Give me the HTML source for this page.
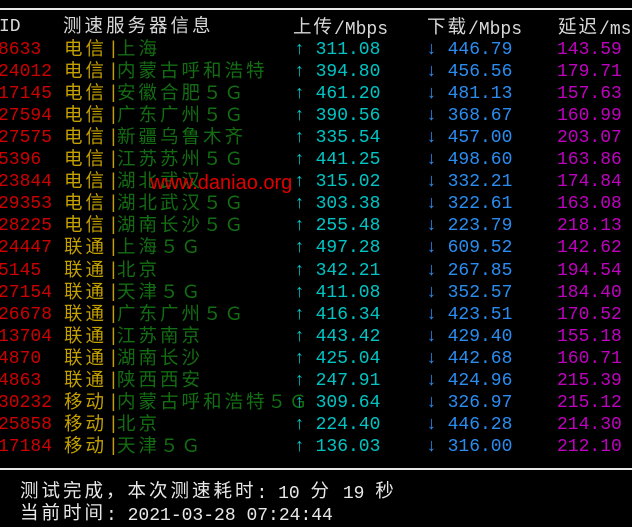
<!DOCTYPE html>
<html><head><meta charset="utf-8"><style>
body{margin:0;width:632px;height:525px;background:#000;overflow:hidden;position:relative;font-family:"Liberation Mono","Noto Sans CJK SC",monospace;font-size:18px}
.r{position:absolute;left:0;width:632px;height:22px;line-height:22px;white-space:nowrap}
.r>span{position:absolute;top:0;line-height:22px}
.id{left:-2px;color:#cc0000}
.isp{left:64px;color:#c4a000}
.bar{left:108px;color:#c4a000}
.city{left:117px;color:#136d13}
.up{left:294px;color:#00c4c4}
.dn{left:426px;color:#2b8cf0}
.lt{left:557px;color:#c000c0}
.hl{position:absolute;left:0;width:632px;height:2px;background:#e8e8e8}
.h{color:#d8d8d8}
.cj,.isp,.city{font-family:"Noto Sans CJK SC",sans-serif;font-size:18.5px;letter-spacing:3px}
.r>.cj,.r>.isp,.r>.city{top:-2px}
.ft{position:absolute;left:20px;color:#e8e8e8;height:22px;line-height:22px;white-space:nowrap}
.ft .cj{position:relative;top:-1px}
</style></head><body>
<div class="hl" style="top:8px"></div>
<div class="r" style="top:16px"><span class="h" style="left:-1px">ID</span><span class="h cj" style="left:63px">测速服务器信息</span><span class="h" style="left:293px"><span class="cj" style="letter-spacing:2px;position:relative;top:-1px">上传</span>/Mbps</span><span class="h" style="left:427px"><span class="cj" style="letter-spacing:2px;position:relative;top:-1px">下载</span>/Mbps</span><span class="h" style="left:558px"><span class="cj" style="letter-spacing:2px;position:relative;top:-1px">延迟</span>/ms</span></div>
<div id="rows"></div>
<div style="position:absolute;left:150px;top:172px;color:#e00000;font-family:'Liberation Sans',sans-serif;font-size:20px">www.daniao.org</div>
<div class="hl" style="top:468px"></div>
<div class="ft" style="top:480px"><span class="cj">测试完成，本次测速耗时</span>: 10 <span class="cj">分</span> 19 <span class="cj">秒</span></div>
<div class="ft" style="top:502px"><span class="cj">当前时间</span>: 2021-03-28 07:24:44</div>
<script>
var d=[["8633","电信","上海","311.08","446.79","143.59"],
["24012","电信","内蒙古呼和浩特","394.80","456.56","179.71"],
["17145","电信","安徽合肥５Ｇ","461.20","481.13","157.63"],
["27594","电信","广东广州５Ｇ","390.56","368.67","160.99"],
["27575","电信","新疆乌鲁木齐","335.54","457.00","203.07"],
["5396","电信","江苏苏州５Ｇ","441.25","498.60","163.86"],
["23844","电信","湖北武汉","315.02","332.21","174.84"],
["29353","电信","湖北武汉５Ｇ","303.38","322.61","163.08"],
["28225","电信","湖南长沙５Ｇ","255.48","223.79","218.13"],
["24447","联通","上海５Ｇ","497.28","609.52","142.62"],
["5145","联通","北京","342.21","267.85","194.54"],
["27154","联通","天津５Ｇ","411.08","352.57","184.40"],
["26678","联通","广东广州５Ｇ","416.34","423.51","170.52"],
["13704","联通","江苏南京","443.42","429.40","155.18"],
["4870","联通","湖南长沙","425.04","442.68","160.71"],
["4863","联通","陕西西安","247.91","424.96","215.39"],
["30232","移动","内蒙古呼和浩特５Ｇ","309.64","326.97","215.12"],
["25858","移动","北京","224.40","446.28","214.30"],
["17184","移动","天津５Ｇ","136.03","316.00","212.10"]];
var h="";
d.forEach(function(r,i){
h+='<div class="r" style="top:'+(39+i*22.05)+'px"><span class="id">'+r[0]+'</span><span class="isp">'+r[1]+'</span><span class="bar">|</span><span class="city">'+r[2]+'</span><span class="up">↑ '+r[3]+'</span><span class="dn">↓ '+r[4]+'</span><span class="lt">'+r[5]+'</span></div>';
});
document.getElementById("rows").innerHTML=h;
</script>
</body></html>
